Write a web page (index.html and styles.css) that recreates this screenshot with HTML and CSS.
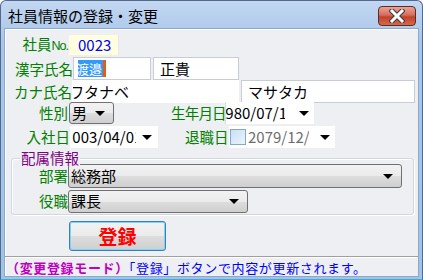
FILE: index.html
```html
<!DOCTYPE html>
<html lang="ja">
<head>
<meta charset="utf-8">
<title>社員情報の登録・変更</title>
<link rel="stylesheet" href="styles.css">
</head>
<body>
<div class="window">
  <div class="titlebar">
    <span class="title">社員情報の登録・変更</span>
    <span class="close">
      <svg width="16" height="14" viewBox="0 0 16 14">
        <path d="M3 2 L13 12 M13 2 L3 12" stroke="#3a3a3a" stroke-width="5" stroke-linecap="square"/>
        <path d="M3 2 L13 12 M13 2 L3 12" stroke="#ffffff" stroke-width="3" stroke-linecap="square"/>
      </svg>
    </span>
  </div>
  <div class="client">
    <div class="row r1">
      <span class="lbl w62">社員<span class="no">No.</span></span>
      <span class="field-no">0023</span>
    </div>
    <div class="row r2">
      <span class="lbl w69">漢字氏名</span>
      <span class="input in-sei"><span class="hl"><span class="hl-t">渡邉</span></span><span class="caret"></span></span>
      <span class="input in-mei">正貴</span>
    </div>
    <div class="row r3">
      <span class="lbl w68">カナ氏名</span>
      <span class="input in-kana1"><span class="shift">ワタナベ</span></span>
      <span class="input in-kana2">マサタカ</span>
    </div>
    <div class="row r4">
      <span class="lbl w64">性別</span>
      <span class="combo c-sex"><span class="cval">男</span><span class="arrow"></span></span>
      <span class="lbl lbl-birth">生年月日</span>
      <span class="date d-birth"><span class="dval dv-birth"><span class="shift2">1980/07/15</span></span><span class="arrow"></span></span>
    </div>
    <div class="row r5">
      <span class="lbl w66">入社日</span>
      <span class="date d-join"><span class="dval dv-join"><span class="shift3">2003/04/01</span></span><span class="arrow"></span></span>
      <span class="lbl lbl-retire">退職日</span>
      <span class="date d-retire"><span class="chk"></span><span class="dval dv-retire gray">2079/12/31</span><span class="arrow"></span></span>
    </div>
    <div class="group">
      <span class="legend">配属情報</span>
      <div class="row g1">
        <span class="lbl w57">部署</span>
        <span class="combo c-dept"><span class="cval">総務部</span><span class="arrow"></span></span>
      </div>
      <div class="row g2">
        <span class="lbl w57">役職</span>
        <span class="combo c-post"><span class="cval">課長</span><span class="arrow"></span></span>
      </div>
    </div>
    <div class="btnrow">
      <span class="btn">登録</span>
    </div>
    <div class="sep"></div>
    <div class="status"><span class="mode">（変更登録モード）</span><span class="msg">「登録」ボタンで内容が更新されます。</span></div>
  </div>
</div>
</body>
</html>
```
FILE: styles.css
```css
* { box-sizing: border-box; }
html, body { margin: 0; padding: 0; }
body {
  width: 423px;
  height: 280px;
  overflow: hidden;
  background: #ffffff;
  font-family: "Noto Sans CJK JP", "Noto Sans", sans-serif;
}
.window {
  width: 423px;
  height: 280px;
  display: flex;
  flex-direction: column;
  background: linear-gradient(#c3d7f1, #a9c6ea 40px, #9ec4e6);
  border: 1px solid #52698d;
  border-bottom-color: #4aa6d4;
  border-radius: 6px 6px 0 0;
  padding: 0 3px 3px 3px;
}
.titlebar {
  height: 27px;
  display: flex;
  align-items: center;
  justify-content: space-between;
  flex: none;
}
.title {
  font-size: 15px;
  line-height: 18px;
  color: #000;
  padding-left: 4px;
  padding-top: 2px;
}
.close {
  width: 38px;
  height: 20px;
  margin-right: 3px;
  margin-top: 3px;
  border: 1px solid #5f2a24;
  border-radius: 4px;
  background: linear-gradient(#e8a395, #d66d5b 45%, #c2412c 55%, #d36b4a);
  display: flex;
  align-items: center;
  justify-content: center;
}
.client {
  flex: 1;
  background: #eeeff2;
  border: 1px solid #8ea8cc;
  box-shadow: inset 1px 1px 0 #ffffff;
  display: flex;
  flex-direction: column;
  font-size: 14px;
}
.row {
  display: flex;
  align-items: center;
  flex: none;
}
.row > * { flex: none; }
.lbl {
  color: #008000;
  text-align: right;
  white-space: nowrap;
  line-height: 16px;
  font-size: 14.5px;
}
.no {
  font-family: "Liberation Sans", sans-serif;
  font-size: 12.5px;
  letter-spacing: -1px;
}
.w62 { width: 63px; margin-right: 1px; }
.w69 { width: 68px; }
.w68 { width: 67px; }
.w64 { width: 63px; }
.w66 { width: 65px; }
.w57 { width: 56px; }

.r1 { margin-top: 6px; height: 20px; }
.field-no {
  width: 50px;
  height: 20px;
  background: #ffffe0;
  color: #0000ff;
  font-size: 15px;
  line-height: 20px;
  padding-left: 9px;
  border-right: 1px solid #e8e8e8;
}
.r2 { margin-top: 2px; height: 23px; }
.input {
  height: 23px;
  background: #ffffff;
  border: 1px solid #c8ccd4;
  font-size: 15px;
  line-height: 21px;
  color: #000;
  overflow: hidden;
  white-space: nowrap;
  display: flex;
  align-items: center;
}
.in-sei { width: 78px; padding-left: 4px; }
.hl {
  display: block;
  background: #3399ff;
  color: #ffffff;
  font-size: 13px;
  line-height: 17px;
  height: 17px;
  width: 25px;
  overflow: hidden;
  white-space: nowrap;
  flex: none;
}
.hl-t { display: inline-block; margin-left: -2px; }
.caret {
  width: 3px;
  height: 17px;
  background: #e0600c;
  flex: none;
}
.in-mei { width: 86px; margin-left: 2px; padding-left: 6px; }
.r3 { height: 23px; }
.in-kana1 { width: 167px; border-color: transparent; }
.shift { display: inline-block; margin-left: -4px; }
.in-kana2 { width: 174px; margin-left: 2px; padding-left: 6px; }
.r4 { height: 22px; margin-top: -1px; }
.combo {
  height: 22px;
  border: 1px solid #707070;
  border-radius: 3px;
  background: linear-gradient(#f2f2f2, #ebebeb 50%, #dddddd 51%, #cfcfcf);
  display: flex;
  align-items: center;
  justify-content: space-between;
  padding: 0 8px 0 2px;
  font-size: 15px;
  line-height: 20px;
  color: #000;
}
.arrow {
  width: 0;
  height: 0;
  border-left: 5px solid transparent;
  border-right: 5px solid transparent;
  border-top: 5px solid #000;
  flex: none;
}
.c-sex { width: 45px; margin-left: 1px; }
.lbl-birth { margin-left: 57px; width: 54px; text-align: left; letter-spacing: -0.8px; }
.date {
  height: 22px;
  background: #ffffff;
  display: flex;
  align-items: center;
  font-size: 15px;
  line-height: 20px;
  color: #000;
  padding-right: 5px;
}
.date .arrow { margin-left: auto; }
.dval {
  display: block;
  overflow: hidden;
  white-space: nowrap;
  flex: none;
  min-width: 0;
}
.d-birth { width: 89px; border-left: 1px solid #dddddd; }
.dv-birth { width: 59px; }
.shift2 { display: inline-block; margin-left: -9px; }
.d-join { width: 88px; padding-left: 2px; padding-right: 6px; }
.dv-join { width: 64px; }
.shift3 { display: inline-block; margin-left: -8px; }
.r5 { height: 22px; margin-top: 2px; }
.lbl-retire { margin-left: 27px; width: 42px; text-align: left; }
.d-retire { width: 106px; margin-left: 2px; }
.dv-retire { width: 61px; }
.chk {
  width: 16px;
  height: 16px;
  border: 1px solid #8aa6c4;
  background: linear-gradient(135deg, #c8e0f6, #eaf4fd);
  margin: 0 2px 0 1px;
  flex: none;
}
.gray { color: #6d6d6d; }

.group {
  position: relative;
  margin: 10px 6px 0 6px;
  width: 403px;
  height: 57px;
  border: 1px solid #d2d6dd;
  border-radius: 3px;
  box-shadow: inset 1px 1px 0 #ffffff, 1px 1px 0 #ffffff;
  padding-top: 5px;
  flex: none;
}
.legend {
  position: absolute;
  top: -9px;
  left: 8px;
  background: #eeeff2;
  color: #800080;
  font-size: 14.5px;
  line-height: 16px;
  padding: 0 1px;
}
.g1 { height: 24px; }
.g2 { height: 24px; margin-top: 1px; }
.c-dept { width: 334px; height: 24px; }
.c-post { width: 180px; height: 23px; }

.btnrow { display: flex; margin-top: 6px; flex: none; }
.btn {
  margin-left: 64px;
  width: 97px;
  height: 30px;
  border: 1px solid #3c7fb1;
  border-radius: 3px;
  box-shadow: inset 0 0 0 1px #7fd3f7;
  background: linear-gradient(#f2f2f2, #ebebeb 50%, #dddddd 51%, #cfcfcf);
  color: #ff0000;
  font-weight: bold;
  font-size: 19px;
  line-height: 28px;
  text-align: center;
}
.sep {
  margin-top: 5px;
  height: 2px;
  border-top: 1px solid #a0a0a0;
  border-bottom: 1px solid #ffffff;
  flex: none;
}
.status {
  font-size: 13px;
  line-height: 17px;
  padding-left: 1px;
  white-space: nowrap;
  margin-top: 1px;
  letter-spacing: 0.65px;
}
.mode { color: #c000c0; font-weight: bold; }
.msg { color: #0000ff; }
```
